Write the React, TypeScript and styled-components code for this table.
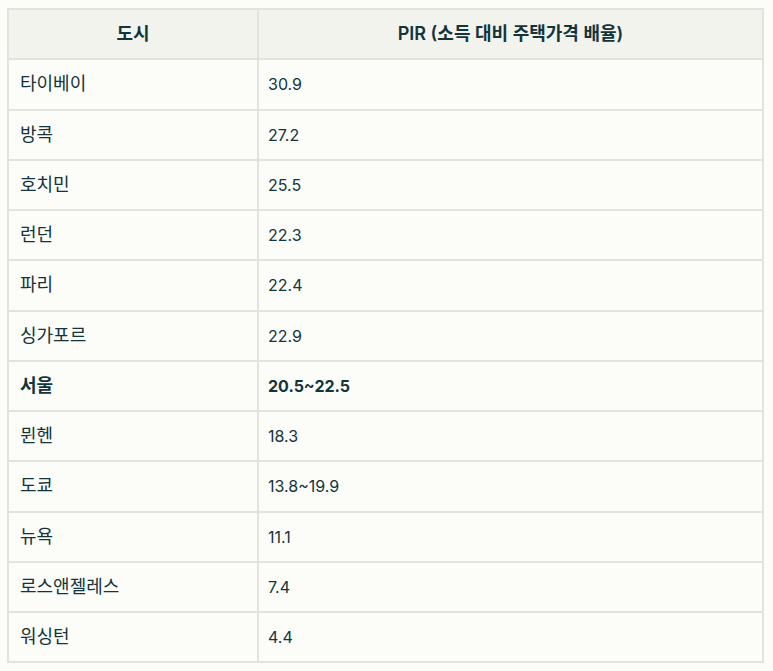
import React from "react";
import styled, { createGlobalStyle } from "styled-components";

const Global = createGlobalStyle`
  html, body {
    margin: 0;
    padding: 0;
    background: #fcfcf9;
  }
  body {
    padding: 8px 9px 8px 7px;
    font-family: Inter, "Noto Sans CJK KR", sans-serif;
    color: #13343b;
  }
`;

const Table = styled.table`
  width: 757px;
  border-collapse: collapse;
  border: 2px solid #e3e2dd;
  font-size: 16px;
  line-height: 24px;
`;

const HeadCell = styled.th`
  background: #f3f3ee;
  font-size: 18px;
  font-weight: 600;
  text-align: center;
  padding: 12px 12px;
  height: 24.25px;
  border: 2px solid #e3e2dd;
  color: #13343b;
`;

const Cell = styled.td<{ $bold?: boolean; $korean?: boolean }>`
  padding: 12px ${(p) => (p.$korean ? "11px" : "9px")};
  height: 24.25px;
  border: 2px solid #e3e2dd;
  font-size: ${(p) => (p.$korean ? "18px" : "16px")};
  font-weight: ${(p) => (p.$bold ? 700 : 400)};
  text-align: left;
  color: #13343b;
`;

const rows: [string, string, boolean?][] = [
  ["타이베이", "30.9"],
  ["방콕", "27.2"],
  ["호치민", "25.5"],
  ["런던", "22.3"],
  ["파리", "22.4"],
  ["싱가포르", "22.9"],
  ["서울", "20.5~22.5", true],
  ["뮌헨", "18.3"],
  ["도쿄", "13.8~19.9"],
  ["뉴욕", "11.1"],
  ["로스앤젤레스", "7.4"],
  ["워싱턴", "4.4"],
];

export default function App() {
  return (
    <>
      <Global />
      <Table>
        <colgroup>
          <col style={{ width: 250 }} />
          <col />
        </colgroup>
        <thead>
          <tr>
            <HeadCell>도시</HeadCell>
            <HeadCell>PIR (소득 대비 주택가격 배율)</HeadCell>
          </tr>
        </thead>
        <tbody>
          {rows.map(([city, v, b]) => (
            <tr key={city}>
              <Cell $bold={b} $korean>
                {city}
              </Cell>
              <Cell $bold={b}>{v}</Cell>
            </tr>
          ))}
        </tbody>
      </Table>
    </>
  );
}
